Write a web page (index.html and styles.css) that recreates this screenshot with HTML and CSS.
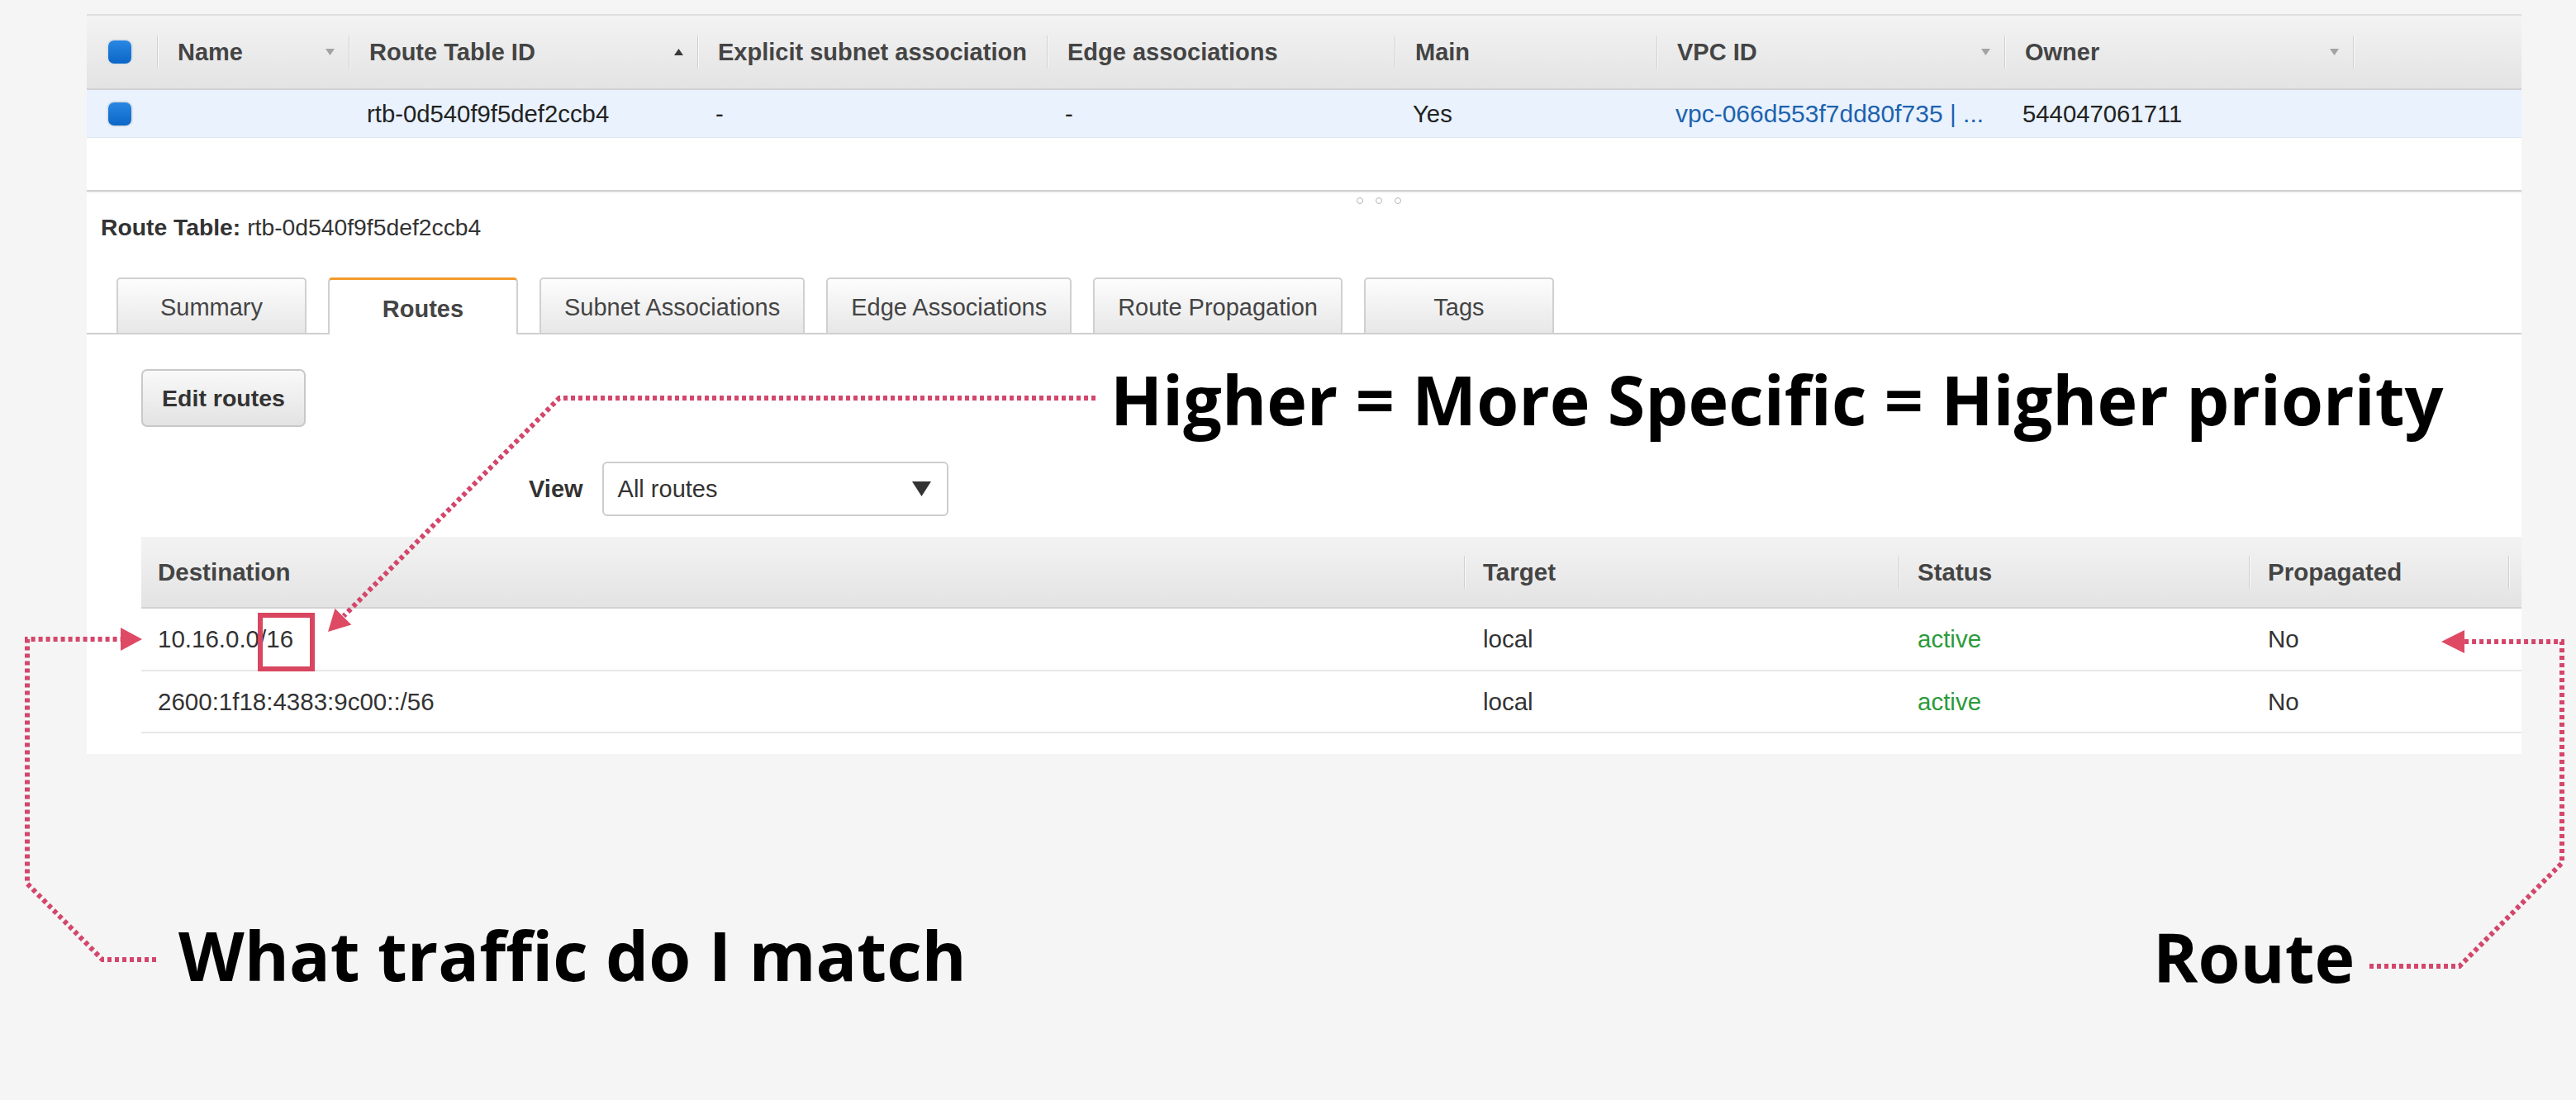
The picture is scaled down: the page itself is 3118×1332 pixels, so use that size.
FILE: index.html
```html
<!DOCTYPE html>
<html>
<head>
<meta charset="utf-8">
<title>Route Table</title>
<link rel="stylesheet" href="styles.css">
</head>
<body>
<div class="page">
  <div class="panel">
    <div class="top-grid top-head">
      <div class="cell chk-cell"><span class="chk"></span></div>
      <div class="cell sep"><span class="htext">Name</span><svg class="tri" width="11" height="8" viewBox="0 0 11 8"><polygon points="0,0 11,0 5.5,8" fill="#a3a3a3"/></svg></div>
      <div class="cell sep"><span class="htext">Route Table ID</span><svg class="tri" width="11" height="8" viewBox="0 0 11 8"><polygon points="0,8 11,8 5.5,0" fill="#3a3a3a"/></svg></div>
      <div class="cell sep clip"><span class="htext">Explicit subnet association</span></div>
      <div class="cell sep"><span class="htext">Edge associations</span></div>
      <div class="cell sep"><span class="htext">Main</span></div>
      <div class="cell sep"><span class="htext">VPC ID</span><svg class="tri" width="11" height="8" viewBox="0 0 11 8"><polygon points="0,0 11,0 5.5,8" fill="#a3a3a3"/></svg></div>
      <div class="cell sep"><span class="htext">Owner</span><svg class="tri" width="11" height="8" viewBox="0 0 11 8"><polygon points="0,0 11,0 5.5,8" fill="#a3a3a3"/></svg></div>
      <div class="cell sep"></div>
    </div>
    <div class="top-grid top-row">
      <div class="cell chk-cell"><span class="chk"></span></div>
      <div class="dcell"></div>
      <div class="dcell">rtb-0d540f9f5def2ccb4</div>
      <div class="dcell">-</div>
      <div class="dcell">-</div>
      <div class="dcell">Yes</div>
      <div class="dcell link">vpc-066d553f7dd80f735 | ...</div>
      <div class="dcell">544047061711</div>
      <div class="dcell"></div>
    </div>
    <div class="spacer"></div>
    <div class="divider"></div>
    <div class="handle"><span class="hdot"></span><span class="hdot"></span><span class="hdot"></span></div>
    <div class="rt-label"><b>Route Table:</b> rtb-0d540f9f5def2ccb4</div>
    <div class="tabs">
      <div class="tab">Summary</div>
      <div class="tab active">Routes</div>
      <div class="tab">Subnet Associations</div>
      <div class="tab">Edge Associations</div>
      <div class="tab">Route Propagation</div>
      <div class="tab">Tags</div>
    </div>
    <div class="content">
      <div class="btn">Edit routes</div>
      <div class="view-row">
        <span class="view-label">View</span>
        <div class="select"><span>All routes</span><svg width="23" height="18" viewBox="0 0 23 18"><polygon points="0,0 23,0 11.5,18" fill="#333"/></svg></div>
      </div>
      <div class="rtable">
        <div class="r-grid r-head">
          <div class="rcell first">Destination</div>
          <div class="rcell sep">Target</div>
          <div class="rcell sep">Status</div>
          <div class="rcell sep">Propagated</div>
          <div class="rcell sep"></div>
        </div>
        <div class="r-grid r-row">
          <div class="rdata first">10.16.0.0/16</div>
          <div class="rdata">local</div>
          <div class="rdata active-txt">active</div>
          <div class="rdata">No</div>
          <div class="rdata"></div>
        </div>
        <div class="r-grid r-row r-row2">
          <div class="rdata first">2600:1f18:4383:9c00::/56</div>
          <div class="rdata">local</div>
          <div class="rdata active-txt">active</div>
          <div class="rdata">No</div>
          <div class="rdata"></div>
        </div>
      </div>
    </div>
  </div>

  <svg class="annot" width="3118" height="1332" viewBox="0 0 3118 1332">
    <g fill="none" stroke="#d4466b" stroke-width="6" stroke-dasharray="5 4">
      <polyline points="1326,482 677,482 416,746"/>
      <polyline points="189,1162 124,1162 33,1070 33,774 148,774"/>
      <polyline points="2868,1170 2977,1170 3101,1045 3101,777 2982,777"/>
    </g>
    <g fill="#de4a64">
      <polygon points="172,774 146,760 146,788"/>
      <polygon points="2955,777 2983,763 2983,791"/>
      <polygon points="397,765 425.3,756.5 405.5,736.7"/>
    </g>
    <rect x="315" y="745" width="63" height="65" fill="none" stroke="#d9465f" stroke-width="6"/>
  </svg>

  <div class="callout c-higher">Higher = More Specific = Higher priority</div>
  <div class="callout c-match">What traffic do I match</div>
  <div class="callout c-route">Route</div>
</div>
</body>
</html>
```

FILE: styles.css
```css
html, body {
  margin: 0;
  padding: 0;
}
body {
  background: #f5f5f5;
  font-family: "Liberation Sans", Arial, Helvetica, sans-serif;
  color: #333;
}
.page {
  position: relative;
  width: 3118px;
  height: 1332px;
  overflow: hidden;
  padding-top: 17px;
  box-sizing: border-box;
}
.panel {
  margin-left: 105px;
  width: 2947px;
  background: #fff;
  border-top: 2px solid #dedede;
}

/* top table */
.top-grid {
  display: grid;
  grid-template-columns: 85px 232px 422px 423px 421px 317px 421px 422px 1fr;
}
.top-head {
  height: 88px;
  background: linear-gradient(#f3f3f3, #e3e3e3);
  border-bottom: 2px solid #d2d2d2;
}
.cell {
  position: relative;
  display: flex;
  align-items: center;
  padding: 0 17px 0 25px;
  overflow: hidden;
  white-space: nowrap;
  font-size: 29px;
  font-weight: bold;
  color: #444;
}
.cell.clip {
  padding-right: 20px;
}
.htext {
  flex: 1;
  overflow: hidden;
}
.tri {
  flex: none;
  margin-left: 8px;
}
.sep::before {
  content: "";
  position: absolute;
  left: 0;
  top: 50%;
  margin-top: -20px;
  height: 40px;
  width: 1px;
  background: #d0d0d0;
  box-shadow: 1px 0 0 #f9f9f9;
}
.chk-cell {
  padding-left: 26px;
}
.chk {
  display: block;
  width: 28px;
  height: 28px;
  border-radius: 7px;
  background: linear-gradient(#2a87e2, #0b66c6);
  box-shadow: 0 0 0 2px #dde2e8;
}
.top-row {
  height: 57px;
  background: #e9f2fd;
  border-bottom: 1px solid #dde6f0;
}
.top-row .cell {
  padding-left: 26px;
}
.dcell {
  display: flex;
  align-items: center;
  padding-left: 22px;
  font-size: 29.3px;
  color: #222;
  white-space: nowrap;
  overflow: hidden;
}
.dcell.link {
  color: #1d62ae;
  padding-left: 23px;
  font-size: 30px;
}

.spacer {
  height: 63px;
}
.divider {
  height: 2px;
  background: #cfcfcf;
  box-shadow: 0 1px 2px #e6e6e6;
}
.handle {
  display: flex;
  gap: 15px;
  padding-left: 1537px;
  margin-top: 7px;
  height: 8px;
}
.hdot {
  width: 6px;
  height: 6px;
  border: 1px solid #b5b5b5;
  border-radius: 50%;
}
.rt-label {
  margin-top: 12px;
  padding-left: 17px;
  height: 32px;
  line-height: 32px;
  font-size: 28.3px;
  color: #333;
}

/* tabs */
.tabs {
  display: flex;
  align-items: flex-end;
  gap: 26px;
  margin-top: 45px;
  padding-left: 36px;
  height: 67px;
  border-bottom: 2px solid #cfcfcf;
}
.tab {
  box-sizing: border-box;
  height: 67px;
  min-width: 230px;
  padding: 4px 28px 0;
  display: flex;
  align-items: center;
  justify-content: center;
  border: 2px solid #d0d0d0;
  border-bottom: none;
  border-radius: 5px 5px 0 0;
  background: linear-gradient(#fdfdfd, #e7e7e7);
  font-size: 29px;
  color: #444;
  white-space: nowrap;
}
.tab.active {
  background: #fff;
  border-top: 3px solid #f39a2b;
  height: 69px;
  margin-bottom: -2px;
  font-weight: bold;
  color: #444;
}

/* content */
.content {
  padding: 42px 0 25px 66px;
}
.btn {
  box-sizing: border-box;
  width: 199px;
  height: 70px;
  display: flex;
  align-items: center;
  justify-content: center;
  border: 2px solid #c8c8c8;
  border-radius: 7px;
  background: linear-gradient(#f9f9f9, #e3e3e3);
  font-size: 28.5px;
  font-weight: bold;
  color: #333;
}
.view-row {
  display: flex;
  align-items: center;
  gap: 23px;
  margin-top: 42px;
  padding-left: 469px;
}
.view-label {
  font-size: 29px;
  font-weight: bold;
  color: #333;
}
.select {
  box-sizing: border-box;
  width: 419px;
  height: 66px;
  border: 2px solid #cdcdcd;
  border-radius: 6px;
  background: #fff;
  display: flex;
  align-items: center;
  justify-content: space-between;
  padding: 0 19px 0 17px;
  font-size: 29px;
  color: #333;
}

.rtable {
  margin-top: 25px;
}
.r-grid {
  display: grid;
  grid-template-columns: 1601px 526px 424px 314px 1fr;
}
.r-head {
  height: 85px;
  background: linear-gradient(#f3f3f3, #e3e3e3);
  border-bottom: 2px solid #d2d2d2;
}
.rcell {
  position: relative;
  display: flex;
  align-items: center;
  padding-left: 23px;
  font-size: 29.5px;
  font-weight: bold;
  color: #444;
  white-space: nowrap;
}
.rcell.first, .rdata.first {
  padding-left: 20px;
}
.r-row {
  height: 74px;
  border-bottom: 2px solid #e8e8e8;
}
.r-row2 {
  height: 73px;
}
.rdata {
  display: flex;
  align-items: center;
  padding-left: 23px;
  font-size: 29.5px;
  color: #333;
  white-space: nowrap;
}
.active-txt {
  color: #2a9b3a;
}

/* annotations */
.annot {
  position: absolute;
  left: 0;
  top: 0;
  pointer-events: none;
}
.callout {
  position: absolute;
  font-family: "Open Sans", "DejaVu Sans", sans-serif;
  font-weight: 700;
  font-size: 82.5px;
  line-height: 82.5px;
  color: #000;
  white-space: nowrap;
}
.c-higher {
  left: 1344px;
  top: 442px;
}
.c-match {
  left: 216px;
  top: 1115px;
}
.c-route {
  left: 2606px;
  top: 1117px;
}
```
